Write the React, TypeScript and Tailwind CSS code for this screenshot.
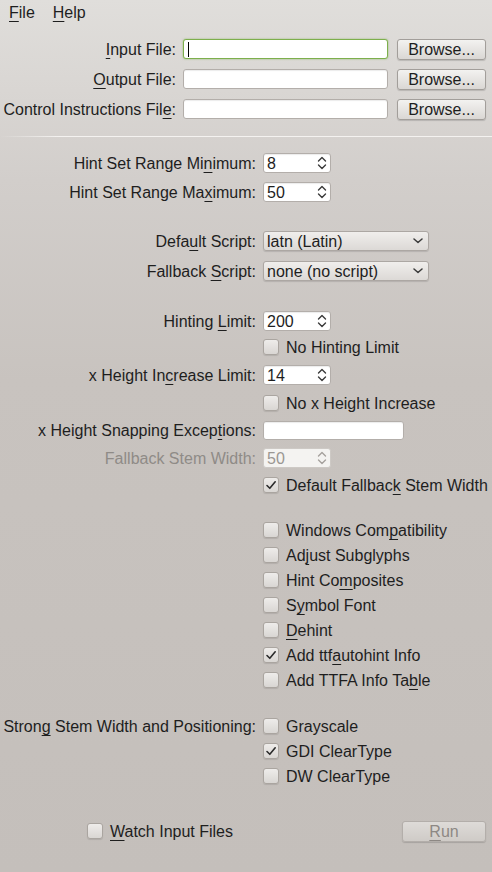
import React from "react";

const U = ({ children }: { children: React.ReactNode }) => (
  <span className="underline underline-offset-[3px] decoration-1 [text-decoration-skip-ink:none]">{children}</span>
);

function Chevrons({ color = "#3a3a3a" }: { color?: string }) {
  return (
    <svg width="10" height="14" viewBox="0 0 10 14" fill="none">
      <path d="M1.5 5 L5 1.5 L8.5 5" stroke={color} strokeWidth="1.4" strokeLinecap="round" strokeLinejoin="round" />
      <path d="M1.5 9 L5 12.5 L8.5 9" stroke={color} strokeWidth="1.4" strokeLinecap="round" strokeLinejoin="round" />
    </svg>
  );
}

function Spin({ value, disabled }: { value: string; disabled?: boolean }) {
  return (
    <div
      className={
        disabled
          ? "w-[68px] h-[20px] rounded-[3px] border border-[#cdc9c5] bg-[#f4f3f1] text-[#9b9793] flex items-center justify-between pl-[3px] pr-[3px]"
          : "w-[68px] h-[20px] rounded-[3px] border border-[#b3aeaa] bg-white text-[#1e1e1e] flex items-center justify-between pl-[3px] pr-[3px] shadow-[inset_0_1px_1px_rgba(0,0,0,0.08)]"
      }
    >
      <span>{value}</span>
      <Chevrons color={disabled ? "#a5a19d" : "#3a3a3a"} />
    </div>
  );
}

function Select({ value }: { value: string }) {
  return (
    <div className="w-[166px] h-[20px] rounded-[3px] border border-[#aca7a3] bg-[linear-gradient(to_bottom,#f0eeec,#dcd9d6)] flex items-center justify-between pl-[3px] pr-[5px] shadow-[0_1px_1px_rgba(0,0,0,0.12)]">
      <span>{value}</span>
      <svg width="10" height="6" viewBox="0 0 10 6" fill="none">
        <path d="M1 1 L5 4.5 L9 1" stroke="#3a3a3a" strokeWidth="1.5" strokeLinecap="round" strokeLinejoin="round" />
      </svg>
    </div>
  );
}

function Box({ checked }: { checked?: boolean }) {
  return (
    <div className="w-[16px] h-[16px] shrink-0 rounded-[3px] border border-[#aaa5a0] bg-[linear-gradient(to_bottom,#eeecea,#d9d6d3)] shadow-[0_1px_1px_rgba(0,0,0,0.1)] flex items-center justify-center">
      {checked && (
        <svg width="12" height="12" viewBox="0 0 12 12" fill="none">
          <path d="M2 6.5 L4.8 9.3 L10.2 2.8" stroke="#2b2b2b" strokeWidth="1.6" strokeLinecap="round" strokeLinejoin="round" />
        </svg>
      )}
    </div>
  );
}

function Check({ checked, children }: { checked?: boolean; children: React.ReactNode }) {
  return (
    <div className="flex items-center gap-[7px] whitespace-nowrap">
      <Box checked={checked} />
      <span>{children}</span>
    </div>
  );
}

function Row({ mt, label, labelClass, children }: { mt: string; label?: React.ReactNode; labelClass?: string; children?: React.ReactNode }) {
  return (
    <div className={"flex items-center h-[24px] " + mt}>
      <div className={"w-[256px] shrink-0 text-right whitespace-nowrap " + (labelClass || "")}>{label}</div>
      <div className="ml-[7px] flex items-center">{children}</div>
    </div>
  );
}

function Btn({ children, disabled, w }: { children: React.ReactNode; disabled?: boolean; w: string }) {
  return (
    <div
      className={
        "h-[21px] rounded-[3px] border flex items-center justify-center shadow-[0_1px_1px_rgba(0,0,0,0.15)] " +
        w +
        (disabled
          ? " border-[#b3aeaa] bg-[linear-gradient(to_bottom,#dedbd8,#cfcbc7)] text-[#8d8884]"
          : " border-[#a29e9a] bg-[linear-gradient(to_bottom,#f3f2f0,#dad7d4)] text-[#1e1e1e]")
      }
    >
      {children}
    </div>
  );
}

function FileRow({ label, focused }: { label: React.ReactNode; focused?: boolean }) {
  return (
    <div className="flex items-center h-[30px]">
      <div className="w-[176px] shrink-0 text-right whitespace-nowrap">{label}</div>
      <div
        className={
          focused
            ? "ml-[7px] w-[205px] h-[20px] rounded-[3px] border border-[#7daf4c] bg-white shadow-[0_0_2px_rgba(110,170,60,0.7)] flex items-center pl-[4px]"
            : "ml-[7px] w-[205px] h-[20px] rounded-[3px] border border-[#b3aeaa] bg-white shadow-[inset_0_1px_1px_rgba(0,0,0,0.08)]"
        }
      >
        {focused && <div className="w-px h-[15px] bg-black" />}
      </div>
      <div className="ml-[9px]">
        <Btn w="w-[89px]">Browse...</Btn>
      </div>
    </div>
  );
}

export default function App() {
  return (
    <div className="w-[492px] h-[872px] overflow-hidden bg-[linear-gradient(to_bottom,#e0dedb_0px,#d2cecb_180px,#c8c3bf_380px,#c4bfbb_872px)] font-['Liberation_Sans',Arial,sans-serif] text-[16px] leading-[19px] text-[#1e1e1e]">
      <div className="h-[24px] flex items-center pl-[9px] gap-[18px]">
        <span><U>F</U>ile</span>
        <span><U>H</U>elp</span>
      </div>

      <div className="mt-[10px]">
        <FileRow focused label={<><U>I</U>nput File:</>} />
        <FileRow label={<><U>O</U>utput File:</>} />
        <FileRow label={<>Control Instructions Fil<U>e</U>:</>} />
      </div>

      <div className="mt-[12px] h-px bg-[linear-gradient(to_right,rgba(245,243,241,0),#f4f2f0_12%,#f4f2f0)]" />

      <Row mt="mt-[14px]" label={<>Hint Set Range Mi<U>n</U>imum:</>}>
        <Spin value="8" />
      </Row>
      <Row mt="mt-[5px]" label={<>Hint Set Range Ma<U>x</U>imum:</>}>
        <Spin value="50" />
      </Row>
      <Row mt="mt-[25px]" label={<>Defa<U>u</U>lt Script:</>}>
        <Select value="latn (Latin)" />
      </Row>
      <Row mt="mt-[6px]" label={<>Fallback <U>S</U>cript:</>}>
        <Select value="none (no script)" />
      </Row>

      <Row mt="mt-[26px]" label={<>Hinting <U>L</U>imit:</>}>
        <Spin value="200" />
      </Row>
      <Row mt="mt-[2px]">
        <Check>No Hinting Limit</Check>
      </Row>
      <Row mt="mt-[4px]" label={<>x Height In<U>c</U>rease Limit:</>}>
        <Spin value="14" />
      </Row>
      <Row mt="mt-[4px]">
        <Check>No x Height Increase</Check>
      </Row>
      <Row mt="mt-[3px]" label={<>x Height Snapping Excep<U>t</U>ions:</>}>
        <div className="w-[141px] h-[19px] rounded-[3px] border border-[#b3aeaa] bg-white shadow-[inset_0_1px_1px_rgba(0,0,0,0.08)]" />
      </Row>
      <Row mt="mt-[4px]" labelClass="text-[#8f8b87]" label={<>Fallback Stem Width:</>}>
        <Spin value="50" disabled />
      </Row>
      <Row mt="mt-[3px]">
        <Check checked>Default Fallbac<U>k</U> Stem Width</Check>
      </Row>

      <Row mt="mt-[21px]">
        <Check>Windows Com<U>p</U>atibility</Check>
      </Row>
      <Row mt="mt-[1px]">
        <Check>Ad<U>j</U>ust Subglyphs</Check>
      </Row>
      <Row mt="mt-[1px]">
        <Check>Hint Co<U>m</U>posites</Check>
      </Row>
      <Row mt="mt-[1px]">
        <Check>S<U>y</U>mbol Font</Check>
      </Row>
      <Row mt="mt-[1px]">
        <Check><U>D</U>ehint</Check>
      </Row>
      <Row mt="mt-[1px]">
        <Check checked>Add ttf<U>a</U>utohint Info</Check>
      </Row>
      <Row mt="mt-[1px]">
        <Check>Add TTFA Info Ta<U>b</U>le</Check>
      </Row>

      <Row mt="mt-[22px]" label={<>Stron<U>g</U> Stem Width and Positioning:</>}>
        <Check>Grayscale</Check>
      </Row>
      <Row mt="mt-[1px]">
        <Check checked>GDI ClearType</Check>
      </Row>
      <Row mt="mt-[1px]">
        <Check>DW ClearType</Check>
      </Row>

      <div className="mt-[31px] h-[24px] flex items-center pl-[87px] pr-[6px]">
        <Check><U>W</U>atch Input Files</Check>
        <div className="ml-auto">
          <Btn disabled w="w-[84px]"><U>R</U>un</Btn>
        </div>
      </div>
    </div>
  );
}
